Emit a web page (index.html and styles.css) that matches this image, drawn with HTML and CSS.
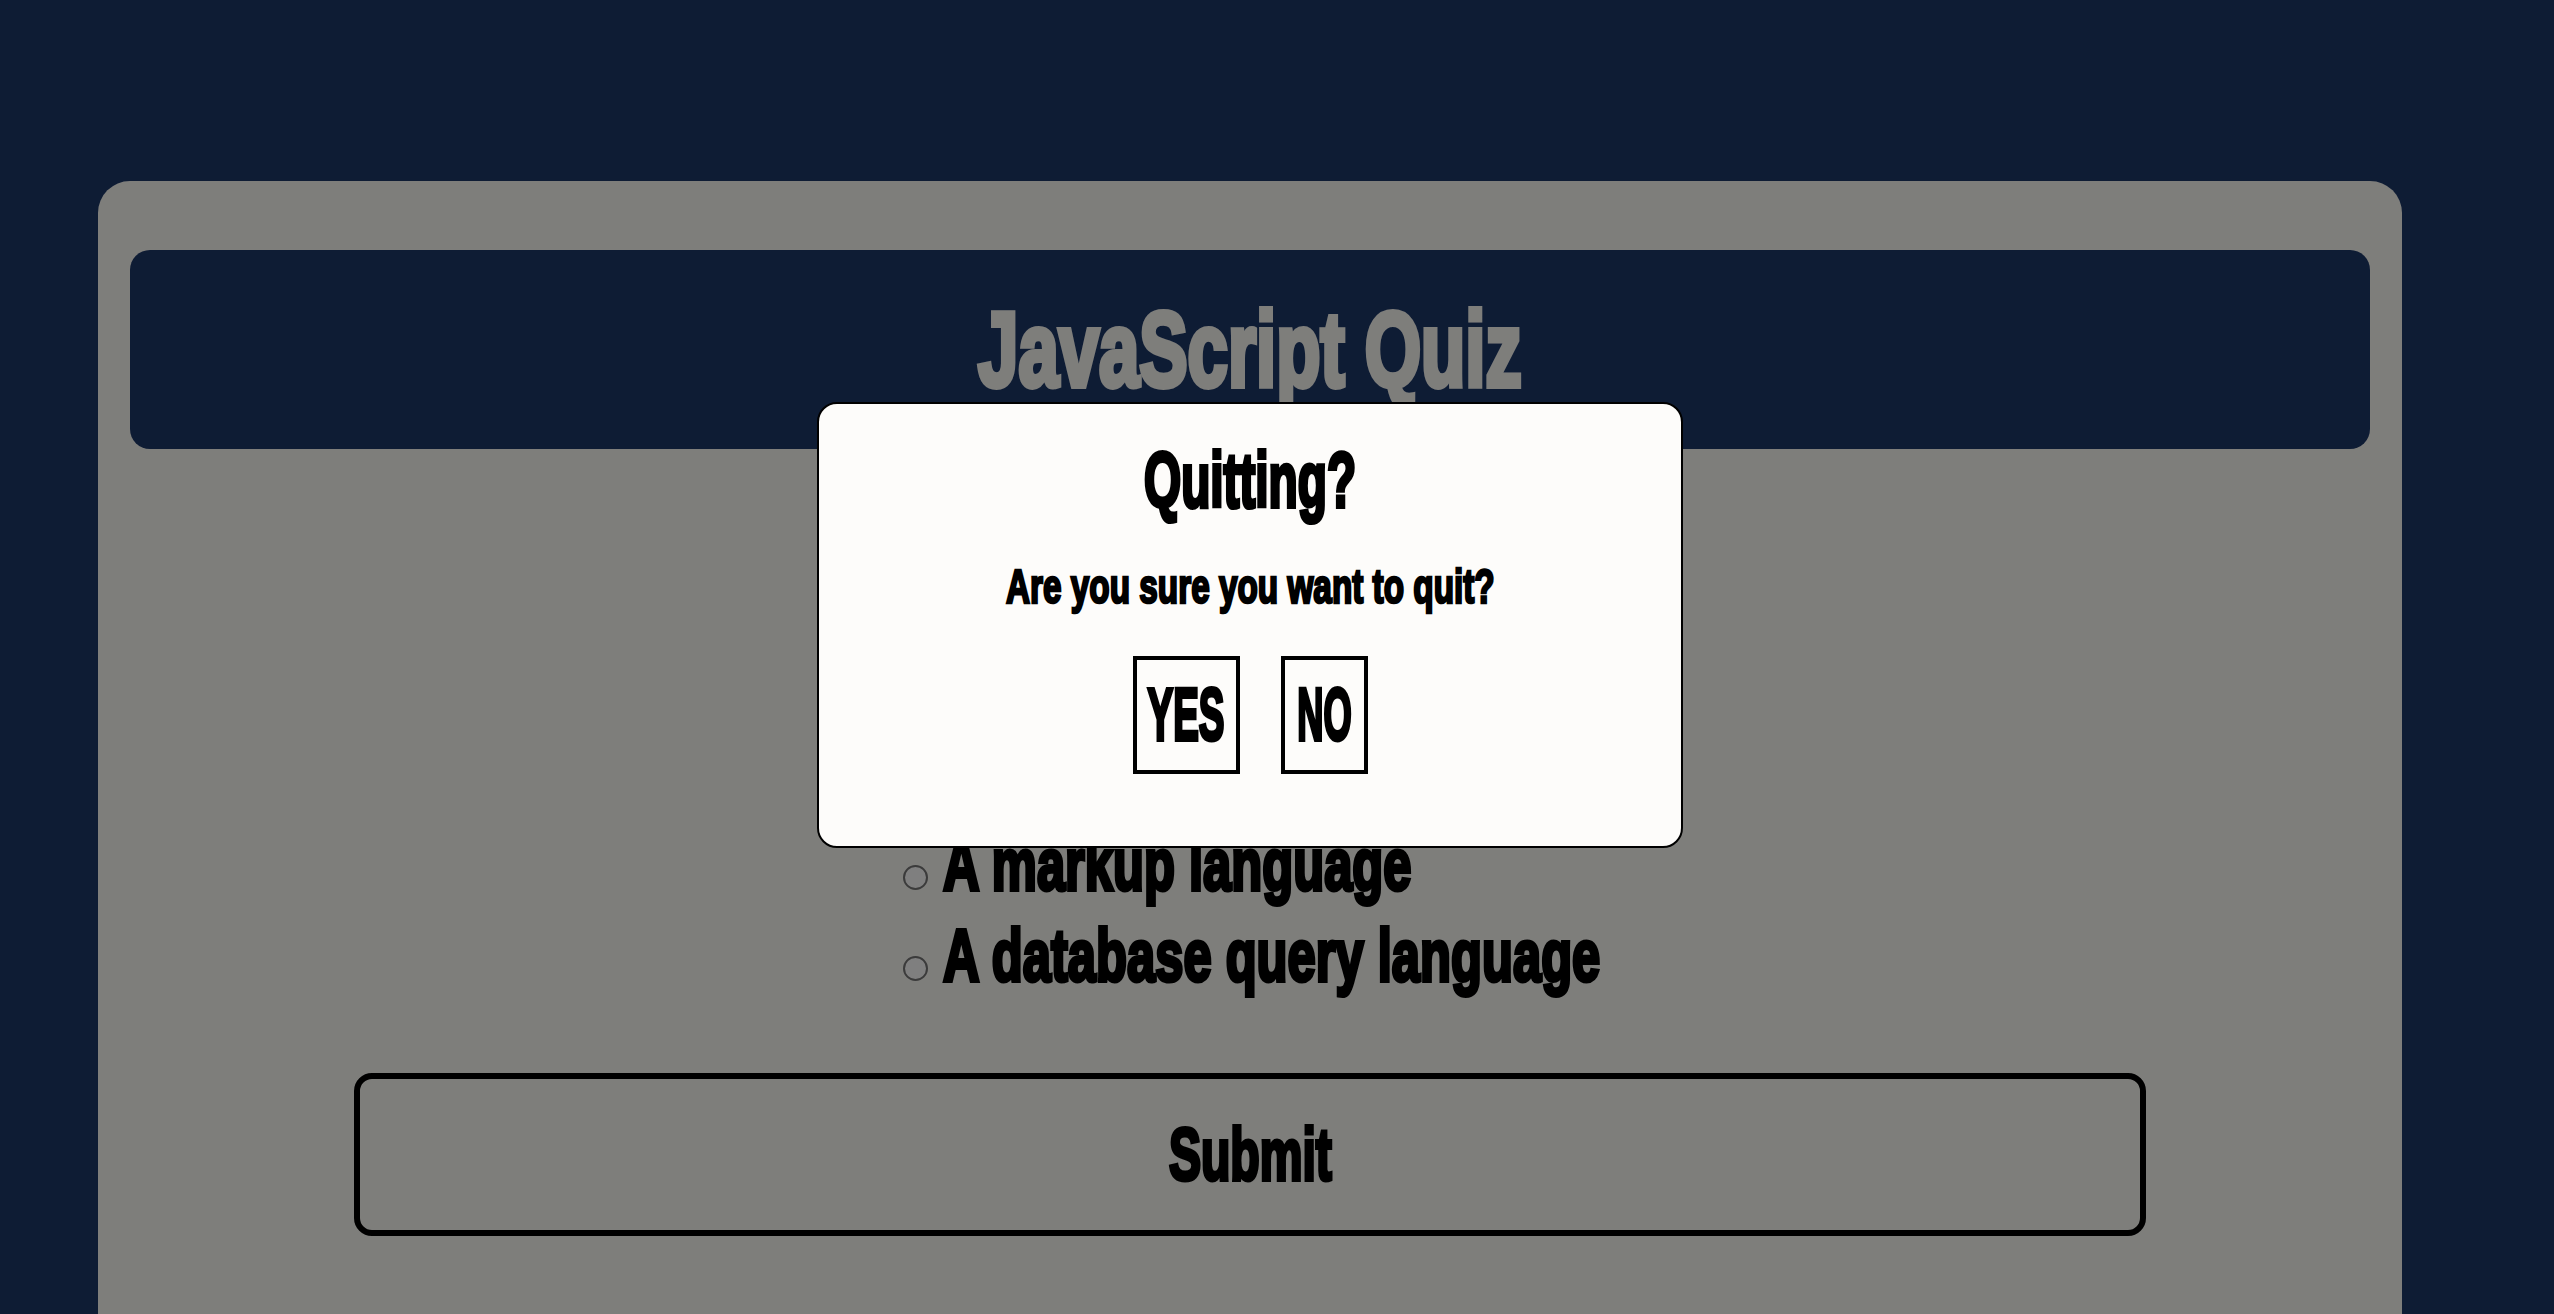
FILE: index.html
```html
<!DOCTYPE html>
<html lang="en">
<head>
<meta charset="utf-8">
<title>JavaScript Quiz</title>
<link rel="stylesheet" href="styles.css">
</head>
<body>
<div class="page">
  <main class="card">
    <header class="quiz-header">
      <h1 class="title"><span class="cond cond-title">JavaScript Quiz</span></h1>
    </header>
    <section class="quiz-body">
      <div class="options">
        <label class="option"><input type="radio" name="answer" class="radio"><span class="cond option-text">A markup language</span></label>
        <label class="option"><input type="radio" name="answer" class="radio"><span class="cond option-text">A database query language</span></label>
      </div>
      <button class="submit"><span class="cond cond-submit">Submit</span></button>
    </section>
    <div class="modal">
      <h2 class="modal-title"><span class="cond cond-quit">Quitting?</span></h2>
      <p class="modal-text"><span class="cond cond-text">Are you sure you want to quit?</span></p>
      <div class="modal-actions">
        <button class="modal-btn modal-btn-yes"><span class="cond cond-yes">YES</span></button>
        <button class="modal-btn modal-btn-no"><span class="cond cond-no">NO</span></button>
      </div>
    </div>
  </main>
</div>
<div class="overlay"></div>
</body>
</html>
```
FILE: styles.css
```css
* { box-sizing: border-box; }

html, body {
  margin: 0;
  padding: 0;
}

body {
  background: #1c3869;
  font-family: "Liberation Sans", Arial, sans-serif;
  font-weight: 700;
  color: #000;
}

/* condensed display type */
.cond {
  display: inline-block;
  transform-origin: center;
  -webkit-text-stroke: 0.055em currentColor;
}
.cond-title  { transform: scaleX(0.69); }
.cond-quit   { transform: scaleX(0.62); }
.cond-text   { transform: scaleX(0.68); }
.cond-yes    { transform: scaleX(0.52); }
.cond-no     { transform: scaleX(0.49); }
.cond-submit { transform: scaleX(0.65); }

.page {
  height: 100vh;
  overflow: hidden;
  padding: 181px 152px 0 98px;
}

.card {
  position: relative;
  background: #fdfcf7;
  border-radius: 32px 32px 0 0;
  padding: 69px 32px 200px;
}

.quiz-header {
  height: 199px;
  background: #1c3869;
  border-radius: 20px;
  display: flex;
  align-items: center;
  justify-content: center;
}

.title {
  margin: 0;
  font-size: 105px;
  line-height: 1;
  color: #fdfcf7;
  font-weight: 700;
}

.quiz-body {
  display: flex;
  flex-direction: column;
  align-items: center;
}

.options {
  margin-top: 370px;
  width: 694px;
}

.option {
  display: block;
  font-size: 74px;
  line-height: 91px;
  white-space: nowrap;
}

.option-text {
  transform: scaleX(0.685);
  transform-origin: left center;
}

.radio {
  appearance: none;
  -webkit-appearance: none;
  width: 25px;
  height: 25px;
  margin: 0 15px 0 0;
  border: 2px solid #767676;
  border-radius: 50%;
  background: #fff;
  vertical-align: baseline;
}

.submit {
  margin-top: 72px;
  width: 80%;
  height: 163px;
  border: 6px solid #000;
  border-radius: 18px;
  background: transparent;
  font-family: inherit;
  font-weight: 700;
  font-size: 74px;
  line-height: 1;
  color: #000;
}

.overlay {
  position: fixed;
  inset: 0;
  background: rgba(0, 0, 0, 0.5);
  z-index: 1;
}

.modal {
  position: absolute;
  z-index: 2;
  top: 221px;
  left: 50%;
  transform: translateX(-50%);
  width: 866px;
  height: 446px;
  background: #fdfcfa;
  border: 2px solid #000;
  border-radius: 20px;
  padding: 38px 0 0;
  text-align: center;
}

.modal-title {
  margin: 0;
  font-size: 77px;
  line-height: 1;
}

.modal-text {
  margin: 43px 0 0;
  font-size: 49px;
  line-height: 1;
}

.modal-actions {
  margin-top: 45px;
  display: flex;
  justify-content: center;
  gap: 41px;
}

.modal-btn {
  display: inline-flex;
  justify-content: center;
  height: 118px;
  background: transparent;
  border: 4px solid #000;
  border-radius: 0;
  padding: 18px 0;
  font-family: inherit;
  font-weight: 700;
  font-size: 74px;
  line-height: 1;
  color: #000;
}

.modal-btn-yes { width: 107px; }
.modal-btn-no  { width: 87px; }
```
